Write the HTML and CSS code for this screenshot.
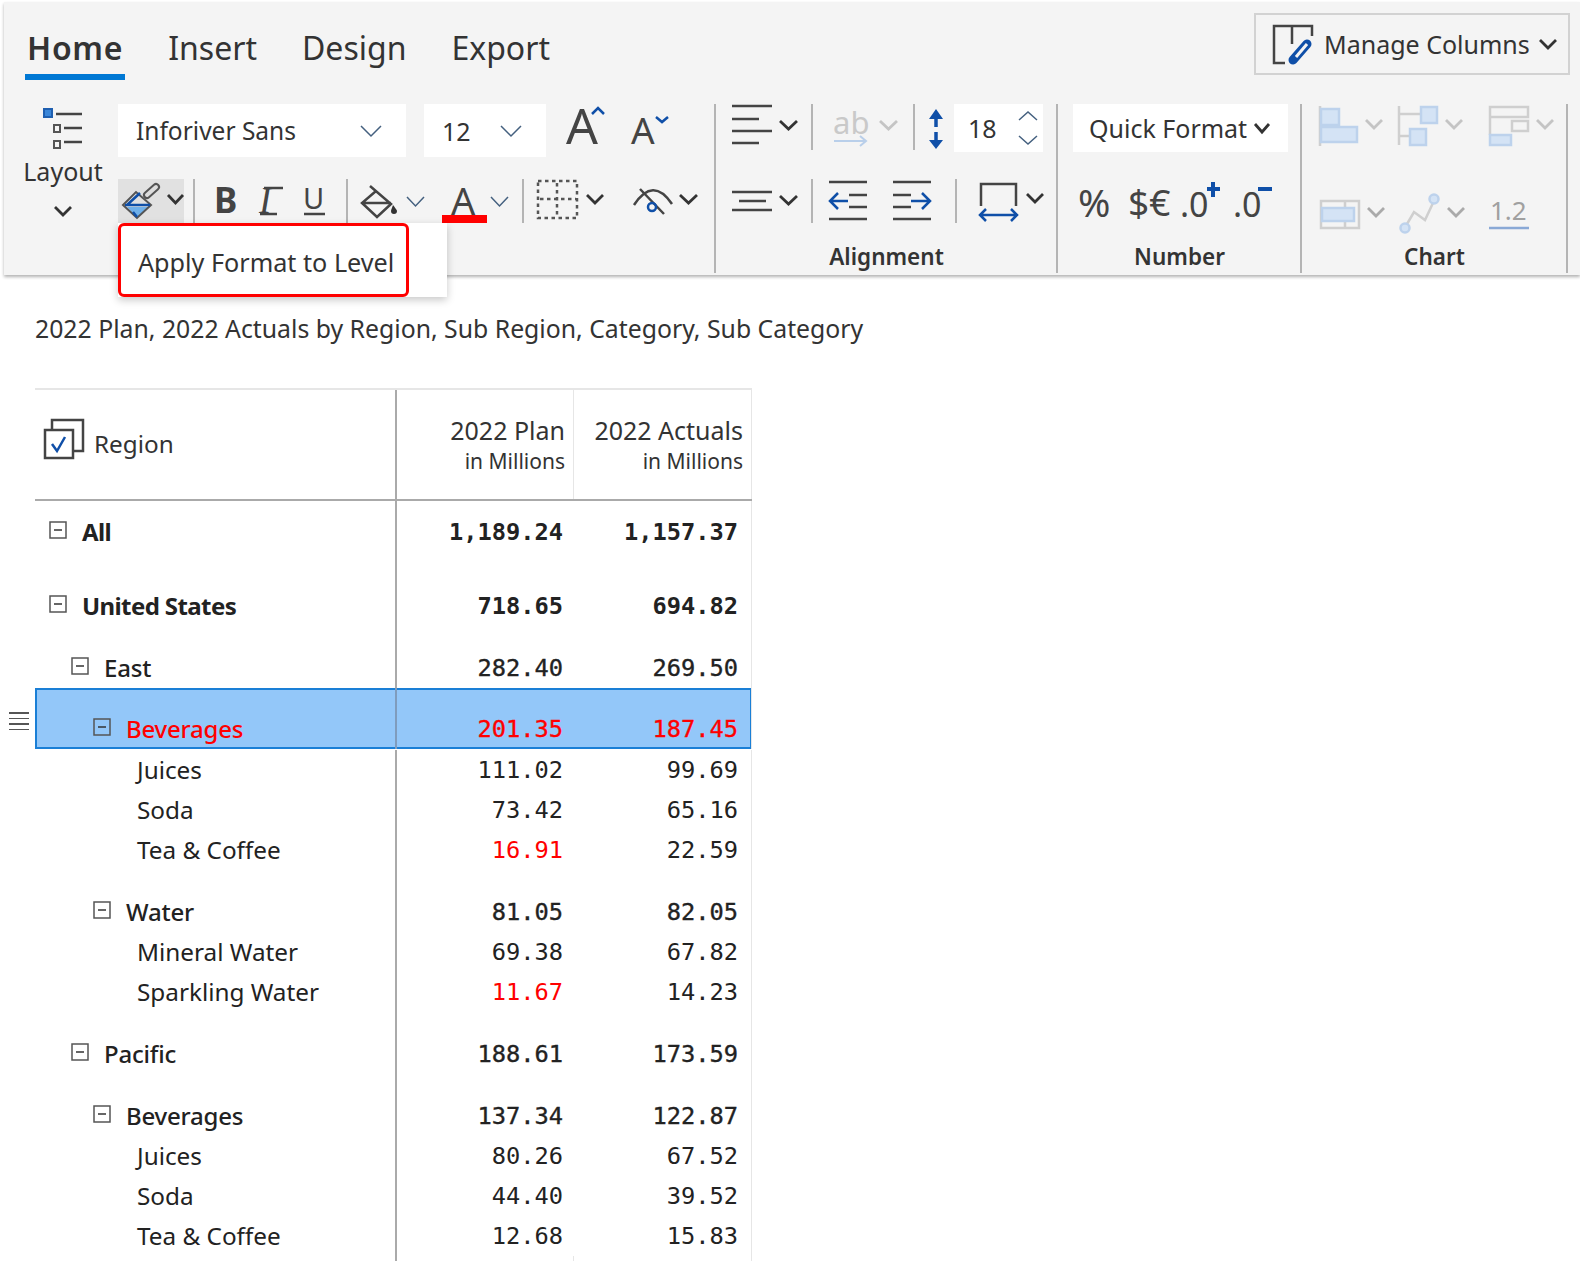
FILE: index.html
```html
<!DOCTYPE html>
<html>
    <head>
        <meta charset="utf-8">
        <title>Apply Format to Level</title>
        <link rel="stylesheet" href="styles.css">
    </head>
    <body>
        <div class="ribbon">
            <div class="ribbon-head">
                <div class="tabs">
                    <span class="tab active">Home</span>
                    <span class="tab">Insert</span>
                    <span class="tab">Design</span>
                    <span class="tab">Export</span>
                </div>
                <div class="manage">
                    <svg class="ic" width="60" height="42" viewBox="1264 23 60 42">
                        <path class="ln" d="M1285 63H1274V26H1312V36M1292 26V44"/>
                        <path class="pen-a" d="M1293 60L1307 44"/>
                        <path class="pen-b" d="M1296 57L1307 44"/>
                    </svg>
                    <span class="manage-text">Manage Columns</span>
                    <svg class="ic" width="20" height="12" viewBox="0 0 20 12"><path class="chev-bold" d="M2 2L10 10L18 2"/></svg>
                </div>
            </div>

            <div class="groups">
                <div class="group-font">
                    <div class="layout-btn">
                        <svg class="ic" width="114" height="49" viewBox="4 104 114 49">
                            <rect class="bullet-on" x="44" y="109" width="8" height="8"/>
                            <rect class="ln-thin" x="54" y="125" width="6" height="7"/>
                            <rect class="ln-thin" x="54" y="141" width="6" height="7"/>
                            <path class="ln" d="M56 114H82M64 128H82M64 142H82"/>
                        </svg>
                        <span class="layout-text">Layout</span>
                        <svg class="ic layout-chev" width="20" height="12" viewBox="0 0 20 12"><path class="chev-bold" d="M2 2L10 10L18 2"/></svg>
                    </div>
                    <div class="font-tools">
                        <div class="row-top">
                            <div class="field font-name">
                                <span>Inforiver Sans</span>
                                <svg class="ic" width="22" height="12" viewBox="0 0 22 12"><path class="chev-thin" d="M1 1L11 11L21 1"/></svg>
                            </div>
                            <div class="field font-size">
                                <span>12</span>
                                <svg class="ic" width="22" height="12" viewBox="0 0 22 12"><path class="chev-thin" d="M1 1L11 11L21 1"/></svg>
                            </div>
                            <svg class="ic" width="60" height="53" viewBox="546 104 60 53">
                                <text class="glyph" x="566" y="144" font-size="50">A</text>
                                <path class="caret" d="M592 114L598 108L604 114"/>
                            </svg>
                            <svg class="ic" width="70" height="53" viewBox="606 104 70 53">
                                <text class="glyph" x="631" y="144" font-size="37">A</text>
                                <path class="caret" d="M656 117L662 122L668 117"/>
                            </svg>
                        </div>
                        <div class="row-bottom">
                            <div class="brush-btn">
                                <svg class="ic" width="66" height="44" viewBox="118 179 66 44">
                                    <path class="blue-fill" d="M127 207H149L137 218Z"/>
                                    <path class="ln-thin" d="M123 205L137 218L151 205L136 192Z"/>
                                    <path class="blue-ln" d="M127 205L140 193M125 205H150M133 212L137 217"/>
                                    <path class="brush-a" d="M147 195L156 187"/>
                                    <path class="brush-b" d="M147 195L156 187"/>
                                    <path class="chev-bold" d="M168 195L175.500 203L183 195"/>
                                </svg>
                                <div class="format-menu">
                                    <div class="format-item">Apply Format to Level</div>
                                </div>
                            </div>
                            <span class="sep"></span>
                            <svg class="ic" width="151" height="44" viewBox="195 179 151 44">
                                <text class="glyph bold" x="214" y="213" font-size="35">B</text>
                                <text class="glyph serif" x="259" y="213" font-size="37">I</text>
                                <text class="glyph" x="303" y="209" font-size="29">U</text>
                                <path class="ln" d="M304 214H325M260 214H277M264 188H283"/>
                            </svg>
                            <span class="sep"></span>
                            <svg class="ic" width="80" height="44" viewBox="348 179 80 44">
                                <path class="ln" d="M370 186L391 204L377 217L362 203L376 191M362 203H391"/>
                                <path class="drop" d="M393 205C396 209 397 210 397 211A3 3 0 0 1 391 211C391 210 392 208 393 205Z"/>
                                <path class="chev-thin" d="M407 197L415.500 206L424 197"/>
                            </svg>
                            <svg class="ic" width="94" height="44" viewBox="428 179 94 44">
                                <text class="glyph" x="451" y="215" font-size="38">A</text>
                                <rect class="red-bar" x="442" y="215" width="45" height="8"/>
                                <path class="chev-thin" d="M491 197L499.500 206L508 197"/>
                            </svg>
                            <span class="sep"></span>
                            <svg class="ic" width="82" height="44" viewBox="524 179 82 44">
                                <rect class="dash" x="538" y="181" width="39" height="37"/>
                                <path class="dash" d="M557 183V217M540 199H576"/>
                                <path class="chev-bold" d="M587 195L595 203L603 195"/>
                            </svg>
                            <svg class="ic" width="110" height="44" viewBox="606 179 110 44">
                                <path class="ln" d="M634 205Q653 176 672 204M640 189L664 214"/>
                                <circle class="blue-ln" cx="652" cy="207" r="4"/>
                                <path class="chev-bold" d="M680 195L688.500 203L697 195"/>
                            </svg>
                        </div>
                    </div>
                </div>

                <div class="group group-align">
                    <div class="row-top">
                        <svg class="ic" width="94" height="48" viewBox="717 104 94 48">
                            <path class="ln" d="M732 106H772M732 119H759M732 131H772M732 143H759"/>
                            <path class="chev-bold" d="M780 121L788.500 129L797 121"/>
                        </svg>
                        <span class="sep short"></span>
                        <svg class="ic" width="100" height="48" viewBox="813 104 100 48">
                            <text class="glyph off" x="833" y="134" font-size="31">ab</text>
                            <path class="ab-arrow" d="M834 141H866M860 136L866 141L860 146"/>
                            <path class="chev-off" d="M880 121L888.500 129L897 121"/>
                        </svg>
                        <span class="sep short"></span>
                        <svg class="ic" width="39" height="48" viewBox="915 104 39 48">
                            <path class="blue-ln arrow-shaft" d="M936 114V127M936 132V145"/>
                            <path class="blue-fill-solid" d="M929 119L936 109L943 119ZM929 140L936 149L943 140Z"/>
                        </svg>
                        <div class="field line-height">
                            <span>18</span>
                            <svg class="ic" width="20" height="34" viewBox="0 0 20 34">
                                <path class="chev-thin" d="M1 9L10 1L19 9M1 25L10 33L19 25"/>
                            </svg>
                        </div>
                    </div>
                    <div class="row-bottom">
                        <svg class="ic" width="94" height="44" viewBox="717 179 94 44">
                            <path class="ln" d="M732 192H772M739 201H766M732 210H772"/>
                            <path class="chev-bold" d="M780 196L788.500 204L797 196"/>
                        </svg>
                        <span class="sep"></span>
                        <svg class="ic" width="142" height="44" viewBox="813 179 142 44">
                            <path class="ln" d="M829 182H867M849 195H867M849 207H867M829 219H867"/>
                            <path class="blue-ln" d="M830 201H848M838 193L830 201L838 209"/>
                            <path class="ln" d="M893 182H931M893 195H911M893 207H911M893 219H931"/>
                            <path class="blue-ln" d="M911 201H930M922 193L930 201L922 209"/>
                        </svg>
                        <span class="sep"></span>
                        <svg class="ic" width="99" height="44" viewBox="957 179 99 44">
                            <path class="ln" d="M981 206V184H1016V206"/>
                            <path class="blue-ln" d="M980 215H1017M986 209L980 215L986 221M1011 209L1017 215L1011 221"/>
                            <path class="chev-bold" d="M1027 194L1035 202L1043 194"/>
                        </svg>
                    </div>
                    <div class="group-label">Alignment</div>
                </div>

                <div class="group group-number">
                    <div class="row-top">
                        <div class="field quick">
                            <span>Quick Format</span>
                            <svg class="ic" width="18" height="12" viewBox="0 0 18 12"><path class="chev-bold" d="M2 2L9 10L16 2"/></svg>
                        </div>
                    </div>
                    <div class="row-bottom">
                        <svg class="ic" width="242" height="44" viewBox="1059 179 242 44">
                            <text class="glyph" x="1078" y="217" font-size="39">%</text>
                            <text class="glyph" x="1128" y="216" font-size="37">$€</text>
                            <text class="glyph" x="1180" y="217" font-size="34">.0</text>
                            <text class="glyph" x="1233" y="217" font-size="34">.0</text>
                            <path class="blue-thick" d="M1213 182V197M1207 189H1220M1258 189H1272"/>
                        </svg>
                    </div>
                    <div class="group-label">Number</div>
                </div>

                <div class="group group-chart">
                    <div class="row-top">
                        <svg class="ic" width="262" height="48" viewBox="1303 104 262 48">
                            <path class="off-ln" d="M1320 106V146"/>
                            <rect class="off-box" x="1321" y="109" width="18" height="16"/>
                            <rect class="off-box" x="1321" y="127" width="36" height="15"/>
                            <path class="chev-off" d="M1366 120L1374 128L1382 120"/>
                            <path class="off-ln" d="M1399 106V145M1399 114H1421M1399 136H1410"/>
                            <rect class="off-box" x="1421" y="107" width="16" height="16"/>
                            <rect class="off-box" x="1410" y="129" width="16" height="16"/>
                            <path class="chev-off" d="M1446 120L1454 128L1462 120"/>
                            <path class="off-ln" d="M1490 135V107H1528V117H1490"/>
                            <rect class="off-ln" x="1512" y="121" width="16" height="10"/>
                            <rect class="off-box" x="1490" y="135" width="21" height="10"/>
                            <path class="chev-off" d="M1537 120L1545 128L1553 120"/>
                        </svg>
                    </div>
                    <div class="row-bottom">
                        <svg class="ic" width="262" height="52" viewBox="1303 179 262 52">
                            <rect class="off-ln" x="1321" y="201" width="38" height="27"/>
                            <path class="off-ln" d="M1345 201V228"/>
                            <rect class="off-box" x="1322" y="208" width="32" height="13"/>
                            <path class="chev-dim" d="M1368 208L1376 216L1384 208"/>
                            <path class="off-ln" d="M1407 224L1414 212L1425 220L1433 203"/>
                            <circle class="off-box" cx="1405" cy="228" r="4.500"/>
                            <circle class="off-box" cx="1434" cy="199" r="4.500"/>
                            <path class="chev-dim" d="M1448 208L1456 216L1464 208"/>
                            <text class="glyph off-num" x="1490" y="220" font-size="26">1.2</text>
                            <path class="num-line" d="M1489 228H1529"/>
                        </svg>
                    </div>
                    <div class="group-label">Chart</div>
                </div>
            </div>
        </div>

        <div class="report-title">2022 Plan, 2022 Actuals by Region, Sub Region, Category, Sub Category</div>

        <div class="grid">
            <div class="row head">
                <div class="cell region">
                    <svg class="ic check-icon" width="42" height="42" viewBox="0 0 42 42">
                        <path class="ln" d="M9 11V2H40V33H31"/>
                        <rect class="check-box" x="2" y="12" width="28" height="28"/>
                        <path class="blue-ln" d="M9 26L14 33L22 19"/>
                    </svg>
                    <span>Region</span>
                </div>
                <div class="cell col"><span>2022 Plan</span><small>in Millions</small></div>
                <div class="cell col"><span>2022 Actuals</span><small>in Millions</small></div>
            </div>

            <div class="row r-all bold">
                <div class="cell name lv0"><svg class="ic tree" width="18" height="18" viewBox="0 0 18 18"><rect x="1" y="1" width="16" height="16"/><path d="M5 9H13"/></svg>All</div>
                <div class="cell num">1,189.24</div><div class="cell num">1,157.37</div>
            </div>
            <div class="row r-us bold">
                <div class="cell name lv0"><svg class="ic tree" width="18" height="18" viewBox="0 0 18 18"><rect x="1" y="1" width="16" height="16"/><path d="M5 9H13"/></svg>United States</div>
                <div class="cell num">718.65</div><div class="cell num">694.82</div>
            </div>
            <div class="row r-par semi">
                <div class="cell name lv1"><svg class="ic tree" width="18" height="18" viewBox="0 0 18 18"><rect x="1" y="1" width="16" height="16"/><path d="M5 9H13"/></svg>East</div>
                <div class="cell num">282.40</div><div class="cell num">269.50</div>
            </div>
            <div class="row r-sel semi selected">
                <span class="handle"></span>
                <div class="cell name lv2"><svg class="ic tree" width="18" height="18" viewBox="0 0 18 18"><rect x="1" y="1" width="16" height="16"/><path d="M5 9H13"/></svg><span class="red">Beverages</span></div>
                <div class="cell num red">201.35</div><div class="cell num red">187.45</div>
            </div>
            <div class="row r-leaf"><div class="cell name leaf">Juices</div><div class="cell num">111.02</div><div class="cell num">99.69</div></div>
            <div class="row r-leaf"><div class="cell name leaf">Soda</div><div class="cell num">73.42</div><div class="cell num">65.16</div></div>
            <div class="row r-leaf"><div class="cell name leaf">Tea &amp; Coffee</div><div class="cell num red">16.91</div><div class="cell num">22.59</div></div>
            <div class="row r-par semi">
                <div class="cell name lv2"><svg class="ic tree" width="18" height="18" viewBox="0 0 18 18"><rect x="1" y="1" width="16" height="16"/><path d="M5 9H13"/></svg>Water</div>
                <div class="cell num">81.05</div><div class="cell num">82.05</div>
            </div>
            <div class="row r-leaf"><div class="cell name leaf">Mineral Water</div><div class="cell num">69.38</div><div class="cell num">67.82</div></div>
            <div class="row r-leaf"><div class="cell name leaf">Sparkling Water</div><div class="cell num red">11.67</div><div class="cell num">14.23</div></div>
            <div class="row r-par semi">
                <div class="cell name lv1"><svg class="ic tree" width="18" height="18" viewBox="0 0 18 18"><rect x="1" y="1" width="16" height="16"/><path d="M5 9H13"/></svg>Pacific</div>
                <div class="cell num">188.61</div><div class="cell num">173.59</div>
            </div>
            <div class="row r-par semi">
                <div class="cell name lv2"><svg class="ic tree" width="18" height="18" viewBox="0 0 18 18"><rect x="1" y="1" width="16" height="16"/><path d="M5 9H13"/></svg>Beverages</div>
                <div class="cell num">137.34</div><div class="cell num">122.87</div>
            </div>
            <div class="row r-leaf"><div class="cell name leaf">Juices</div><div class="cell num">80.26</div><div class="cell num">67.52</div></div>
            <div class="row r-leaf"><div class="cell name leaf">Soda</div><div class="cell num">44.40</div><div class="cell num">39.52</div></div>
            <div class="row r-leaf"><div class="cell name leaf">Tea &amp; Coffee</div><div class="cell num">12.68</div><div class="cell num">15.83</div></div>
            <div class="row r-end"><div class="cell name"></div><div class="cell"></div><div class="cell"></div></div>
        </div>
    </body>
</html>
```

FILE: styles.css
```css
html, body {
    height: 1261px;
    overflow: hidden;
}
body {
    margin: 0;
    background: #fff;
    color: #222;
    font-family: "Noto Sans", "Open Sans", sans-serif;
}

/* ribbon */
.ribbon {
    position: relative;
    margin: 2px 0 0 4px;
    height: 273px;
    background: #f4f4f4;
    box-shadow: 0 2px 3px rgba(0,0,0,.3);
}
.ribbon-head {
    display: flex;
    justify-content: space-between;
    align-items: flex-start;
    height: 102px;
    padding: 0 10px 0 21px;
    box-sizing: border-box;
}
.tabs {
    display: flex;
    gap: 41px;
    margin-top: 24px;
}
.tab {
    height: 44px;
    padding: 0 2px 4px;
    border-bottom: 6px solid transparent;
    font-size: 32px;
    line-height: 44px;
    color: #333;
}
.tab.active {
    border-bottom-color: #0078d4;
    font-weight: 600;
    letter-spacing: .7px;
}
.manage {
    display: flex;
    align-items: center;
    box-sizing: border-box;
    width: 316px;
    height: 62px;
    margin-top: 11px;
    padding-left: 8px;
    border: 2px solid #d2d2d2;
    font-size: 25px;
    color: #333;
}
.manage-text {
    width: 214px;
    white-space: nowrap;
}
.groups {
    display: flex;
    height: 169px;
}
.group-font {
    display: flex;
    width: 710px;
}
.layout-btn {
    display: flex;
    flex-direction: column;
    align-items: center;
    width: 114px;
}
.layout-text {
    margin-left: 4px;
    font-size: 25px;
    line-height: 36px;
    color: #333;
}
.layout-chev {
    margin: 16px 0 0 4px;
}
.font-tools {
    flex: 1;
}
.row-top {
    display: flex;
    height: 53px;
}
.row-bottom {
    display: flex;
    height: 44px;
    margin-top: 22px;
}
.field {
    display: flex;
    align-items: center;
    justify-content: space-between;
    box-sizing: border-box;
    background: #fff;
    font-size: 25px;
    white-space: nowrap;
    color: #333;
}
.font-name {
    width: 288px;
    height: 53px;
    padding: 0 24px 0 18px;
    font-size: 24.500px;
}
.font-size {
    width: 122px;
    height: 53px;
    margin-left: 18px;
    padding: 0 24px 0 18px;
}
.line-height {
    width: 89px;
    height: 48px;
    padding: 0 5px 0 14px;
}
.quick {
    width: 215px;
    height: 48px;
    margin-left: 14px;
    padding: 0 17px 0 16px;
}
.sep {
    display: block;
    flex: none;
    width: 2px;
    height: 44px;
    background: #b4b4b4;
}
.sep.short {
    height: 46px;
}
.brush-btn {
    position: relative;
    width: 66px;
    height: 44px;
    margin-right: 9px;
    background: #e1e1e1;
}
.format-menu {
    position: absolute;
    top: 44px;
    left: 0;
    z-index: 2;
    width: 329px;
    height: 74px;
    background: #fff;
    box-shadow: 0 3px 8px rgba(0,0,0,.22);
}
.format-item {
    box-sizing: border-box;
    width: 291px;
    height: 74px;
    padding-left: 17px;
    border: 3px solid #f00;
    border-radius: 6px;
    font-size: 25.200px;
    line-height: 72px;
    white-space: nowrap;
    color: #333;
}
.group {
    box-sizing: border-box;
    padding-left: 1px;
    border-left: 2px solid #b4b4b4;
}
.group-align {
    width: 342px;
}
.group-number {
    width: 244px;
}
.group-chart {
    width: 268px;
    border-right: 2px solid #b4b4b4;
}
.group-label {
    margin-top: 16px;
    text-align: center;
    font-size: 22.500px;
    font-weight: 600;
    line-height: 36px;
    color: #333;
}

/* icon strokes */
.ic {
    display: block;
    flex: none;
    fill: none;
    overflow: visible;
}
.ln { stroke: #444; stroke-width: 2.5; }
.ln-thin { stroke: #555; stroke-width: 2; }
.blue-ln { stroke: #0f4fa8; stroke-width: 2.500; }
.arrow-shaft { stroke-width: 3.500; }
.blue-thick { stroke: #0f4fa8; stroke-width: 4; }
.blue-fill { fill: #6fb0ea; }
.blue-fill-solid { fill: #0f4fa8; }
.bullet-on { fill: #3a86d8; stroke: #1f5fb0; stroke-width: 2; }
.chev-bold { stroke: #333; stroke-width: 2.800; }
.chev-thin { stroke: #44607f; stroke-width: 1.500; }
.chev-off { stroke: #c4c4c4; stroke-width: 2.800; }
.chev-dim { stroke: #aaa; stroke-width: 2.800; }
.caret { stroke: #0f4fa8; stroke-width: 2.500; }
.pen-a { stroke: #0f4fa8; stroke-width: 9; stroke-linecap: round; }
.pen-b { stroke: #f4f4f4; stroke-width: 3; }
.brush-a { stroke: #555; stroke-width: 8; stroke-linecap: round; }
.brush-b { stroke: #ddd; stroke-width: 4; stroke-linecap: round; }
.drop { fill: #333; }
.red-bar { fill: #f00; }
.dash { stroke: #555; stroke-width: 2.500; stroke-dasharray: 3.500 3.500; }
.ab-arrow { stroke: #b9cfea; stroke-width: 2; }
.off-ln { stroke: #cfcfcf; stroke-width: 2.500; }
.off-box { fill: #d4e3f5; stroke: #bdd2ec; stroke-width: 2.500; }
.num-line { stroke: #8aa9d6; stroke-width: 2.500; }
.check-box { fill: #fff; stroke: #444; stroke-width: 2.500; }
.glyph { fill: #444; font-family: "Noto Sans", sans-serif; }
.glyph.bold { font-weight: 700; }
.glyph.serif { font-family: "Liberation Serif", serif; font-style: italic; }
.glyph.off { fill: #c9c9c9; }
.glyph.off-num { fill: #a0a0a0; }

/* report */
.report-title {
    margin: 35px 0 0 35px;
    font-size: 24.800px;
    line-height: 36px;
    color: #333;
}
.grid {
    margin: 42px 0 0 35px;
    width: 717px;
    font-size: 24.300px;
}
.row {
    position: relative;
    display: grid;
    grid-template-columns: 362px 177px 178px;
    box-sizing: border-box;
}
.cell {
    display: flex;
    align-items: flex-end;
    box-sizing: border-box;
    border-right: 1px solid #e6e6e6;
}
.cell.name {
    gap: 15px;
    line-height: 40px;
    border-right: 2px solid #aaa;
}
.cell.num {
    justify-content: flex-end;
    padding-right: 10px;
    font-family: "DejaVu Sans Mono", monospace;
    font-size: 23.700px;
    line-height: 40px;
    border-right-color: transparent;
}
.cell.num:last-child {
    padding-right: 13px;
    border-right-color: #e6e6e6;
}
.lv0 { padding-left: 14px; }
.lv1 { padding-left: 36px; }
.lv2 { padding-left: 58px; }
.leaf { padding-left: 102px; }
.tree {
    margin-bottom: 13px;
}
.tree rect { stroke: #555; stroke-width: 1.500; }
.tree path { stroke: #333; stroke-width: 1.500; }
.bold .name {
    font-size: 24px;
    font-weight: 700;
    letter-spacing: -.6px;
}
.bold .num { font-weight: 700; }
.semi .name {
    font-size: 24px;
    font-weight: 500;
    letter-spacing: -.2px;
}
.semi .num { -webkit-text-stroke: .35px; }
.red { color: #f00; }
.r-all { height: 51px; }
.r-us { height: 74px; }
.r-par { height: 62px; }
.r-sel { height: 61px; margin-bottom: 1px; }
.r-leaf { height: 40px; }
.r-end { height: 20px; }

.head {
    height: 113px;
    border-top: 2px solid #e6e6e6;
    border-bottom: 2px solid #aaa;
}
.region {
    align-items: center;
    gap: 9px;
    padding: 0 0 3px 8px;
    border-right: 2px solid #aaa;
    color: #333;
}
.check-icon {
    margin-bottom: 8px;
}
.col {
    flex-direction: column;
    align-items: flex-end;
    padding: 21px 8px 0 0;
    font-size: 25px;
    line-height: 38px;
    color: #333;
}
.col small {
    font-size: 21px;
    line-height: 24px;
}
.selected {
    background: #93c7f9;
    box-shadow: inset 0 0 0 2px #1a7fd6;
}
.selected .cell {
    border-right-color: transparent;
}
.selected .cell.name {
    border-right-color: #7f9cbd;
}
.handle {
    position: absolute;
    left: -26px;
    top: 24px;
    width: 20px;
    height: 19px;
    background: repeating-linear-gradient(#555 0 1.500px, transparent 1.500px 5.500px);
}
```
